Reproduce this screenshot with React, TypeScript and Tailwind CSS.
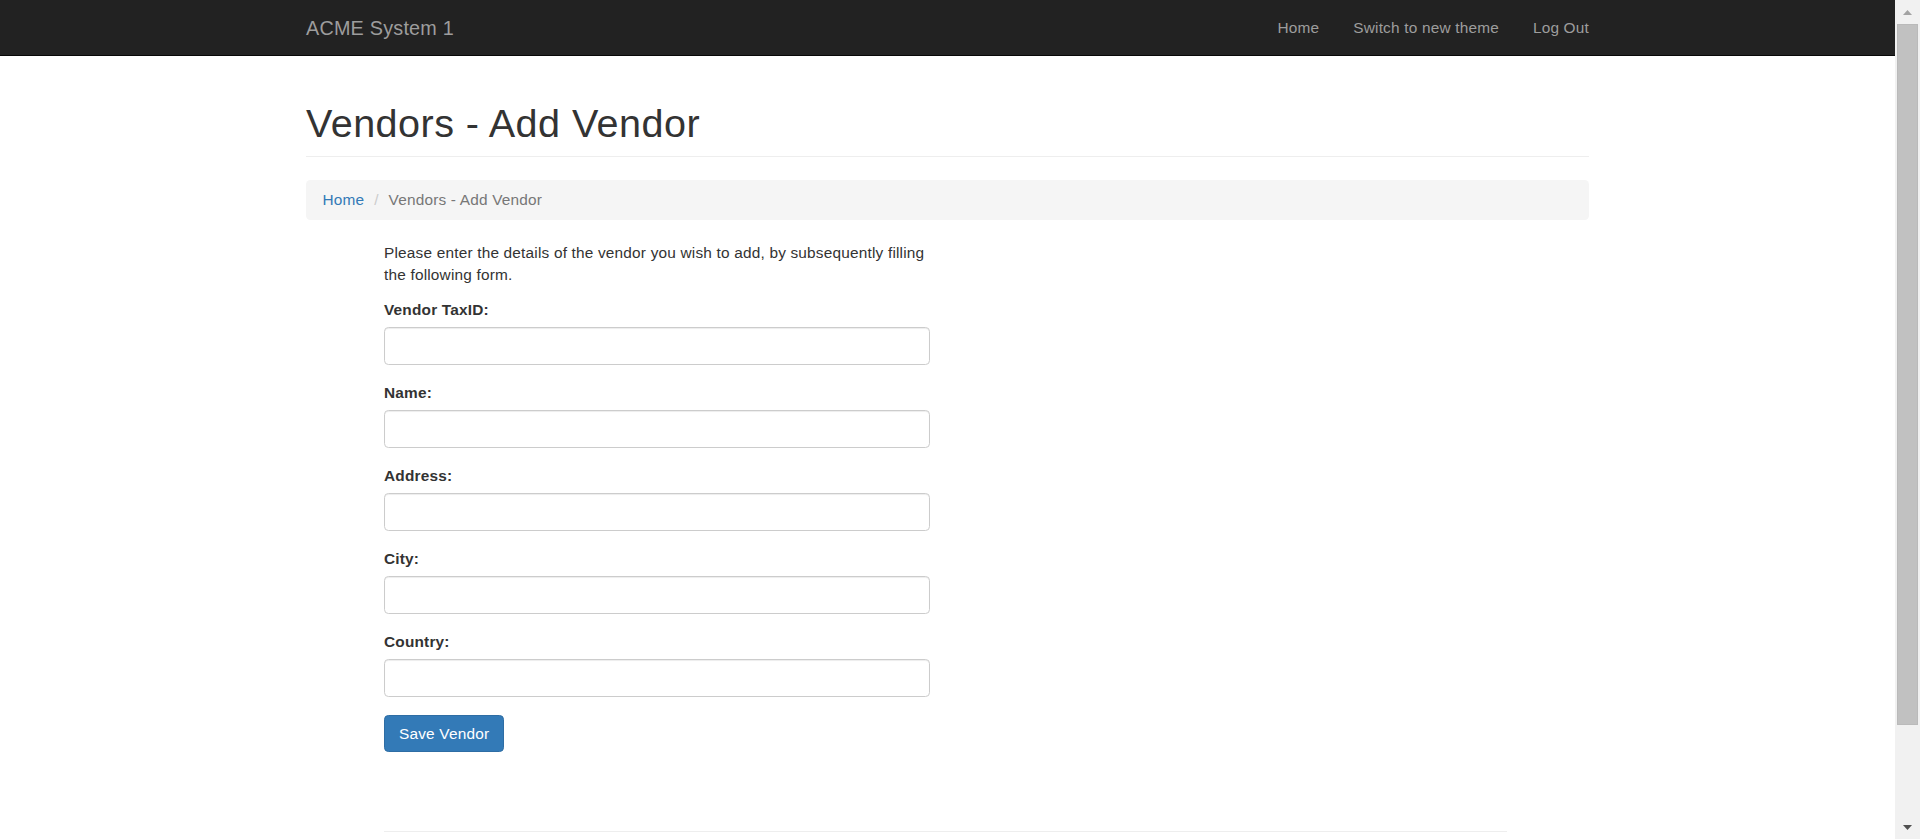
const fields = ['Vendor TaxID:', 'Name:', 'Address:', 'City:', 'Country:'];

function Scrollbar() {
  return (
    <div className="flex w-[25px] shrink-0 flex-col bg-[#f1f1f1]">
      <div className="flex h-[24px] items-center justify-center">
        <svg width="9" height="5" viewBox="0 0 9 5">
          <path d="M0 5 L4.5 0 L9 5 Z" fill="#a3a3a3" />
        </svg>
      </div>
      <div className="mx-[2px] h-[701px] border border-[#bababa] bg-[#c1c1c1]" />
      <div className="flex-1" />
      <div className="flex h-[24px] items-center justify-center">
        <svg width="9" height="5" viewBox="0 0 9 5">
          <path d="M0 0 L9 0 L4.5 5 Z" fill="#505050" />
        </svg>
      </div>
    </div>
  );
}

export default function App() {
  return (
    <div className="flex h-[839px] w-full overflow-hidden bg-white font-['Liberation_Sans',Arial,sans-serif] text-[15.4px] leading-[22px] tracking-[0.19px] text-[#333]">
      <div className="min-w-0 flex-1">
        <nav className="h-[56px] border-b border-[#080808] bg-[#222]">
          <div className="mx-auto flex h-full w-[1283px] items-center justify-between">
            <a href="#" className="text-[19.8px] leading-[22px] tracking-[0.22px] text-[#9d9d9d]">ACME System 1</a>
            <ul className="flex gap-[34px] text-[#9d9d9d]">
              <li><a href="#">Home</a></li>
              <li><a href="#">Switch to new theme</a></li>
              <li><a href="#">Log Out</a></li>
            </ul>
          </div>
        </nav>

        <div className="mx-auto w-[1283px] pt-[45px]">
          <div className="border-b border-[#eee] pb-[11px]">
            <h1 className="text-[39.6px] font-normal leading-[44px] tracking-[0.45px] text-[#333]">Vendors - Add Vendor</h1>
          </div>

          <ol className="mt-[23px] flex h-[40px] items-center gap-[4.3px] rounded-[4.4px] bg-[#f5f5f5] px-[16.5px]">
            <li><a href="#" className="text-[#337ab7]">Home</a></li>
            <li className="text-[#777]">
              <span className="px-[5.5px] text-[#ccc]">/</span>
              {'\u00a0'}Vendors - Add Vendor
            </li>
          </ol>

          <div className="ml-[78px] mt-[22px] w-[546px]">
            <p className="mb-[13px]">
              Please enter the details of the vendor you wish to add, by subsequently filling the following form.
            </p>
            {fields.map((f) => (
              <div key={f} className="mb-[17px]">
                <label className="mb-[6px] block font-bold">{f}</label>
                <input
                  type="text"
                  className="block h-[38px] w-full rounded-[4.4px] border border-[#ccc] bg-white px-[13px] shadow-[inset_0_1px_1px_rgba(0,0,0,0.075)] outline-none"
                />
              </div>
            ))}
            <button className="mt-px h-[37px] rounded-[4.4px] border border-[#2e6da4] bg-[#337ab7] px-[14px] text-white">
              Save Vendor
            </button>
          </div>

          <hr className="ml-[78px] mt-[79px] w-[1123px] border-t border-[#eee]" />
        </div>
      </div>
      <Scrollbar />
    </div>
  );
}
